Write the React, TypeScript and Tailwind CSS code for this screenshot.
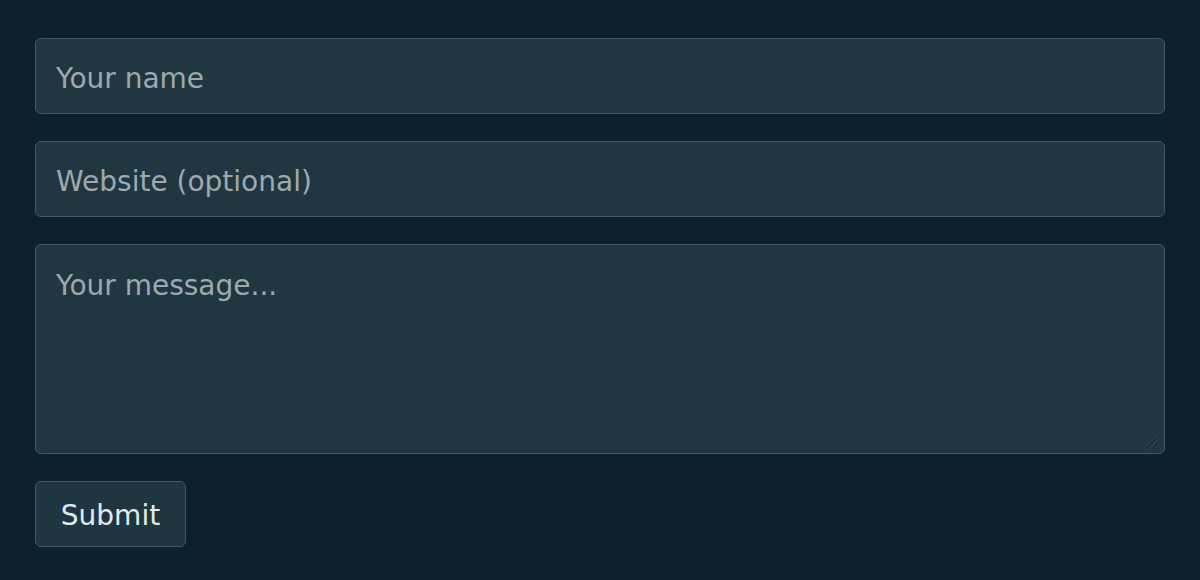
import { useState } from "react";

const field =
  "w-full rounded-[6px] border border-[#435a65] bg-[#203641] px-[20px] text-[28px] text-[#d8e1e5] placeholder:text-[#9ea9ad] outline-none focus:border-[#5d7885]";

export default function App() {
  const [name, setName] = useState("");
  const [site, setSite] = useState("");
  const [message, setMessage] = useState("");

  return (
    <div
      className="min-h-[580px] w-full bg-[#0d202b] px-[35px] pt-[38px]"
      style={{ fontFamily: '"DejaVu Sans", sans-serif' }}
    >
      <form
        className="flex flex-col gap-[27px]"
        onSubmit={(e) => e.preventDefault()}
      >
        <input
          className={`${field} h-[76px] pt-[4px]`}
          placeholder="Your name"
          value={name}
          onChange={(e) => setName(e.target.value)}
        />
        <input
          className={`${field} h-[76px] pt-[4px]`}
          placeholder="Website (optional)"
          value={site}
          onChange={(e) => setSite(e.target.value)}
        />
        <div className="relative">
          <textarea
            className={`${field} block h-[210px] resize-none pt-[21px] pb-[19px] leading-[40px]`}
            placeholder="Your message..."
            value={message}
            onChange={(e) => setMessage(e.target.value)}
          />
          {/* resize grip */}
          <svg
            className="pointer-events-none absolute bottom-[3px] right-[5px]"
            width="16"
            height="16"
            viewBox="0 0 16 16"
          >
            <path d="M2 14 L14 2" stroke="#3d5561" strokeWidth="2.6" />
            <path d="M8 14 L14 8" stroke="#3d5561" strokeWidth="2.6" />
            <path d="M2 14 L14 2" stroke="#0f1d25" strokeWidth="1.4" />
            <path d="M8 14 L14 8" stroke="#0f1d25" strokeWidth="1.4" />
          </svg>
        </div>
        <div>
          <button
            type="submit"
            className="h-[66px] w-[151px] rounded-[6px] border border-[#435a65] bg-[#1f3540] pt-[4px] text-[28px] text-[#e2eaee]"
          >
            Submit
          </button>
        </div>
      </form>
    </div>
  );
}
